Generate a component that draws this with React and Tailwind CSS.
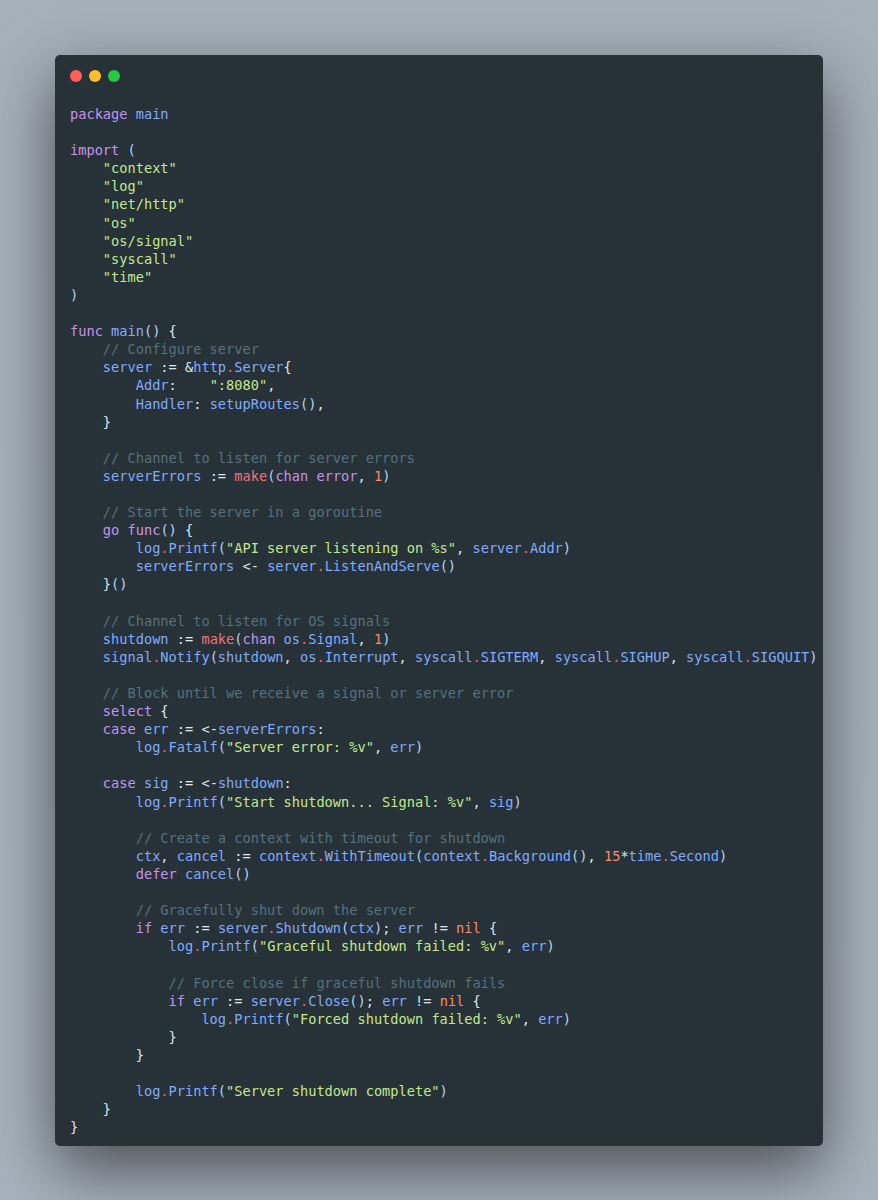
import React from 'react'

const code = `package main

import (
    "context"
    "log"
    "net/http"
    "os"
    "os/signal"
    "syscall"
    "time"
)

func main() {
    // Configure server
    server := &http.Server{
        Addr:    ":8080",
        Handler: setupRoutes(),
    }

    // Channel to listen for server errors
    serverErrors := make(chan error, 1)

    // Start the server in a goroutine
    go func() {
        log.Printf("API server listening on %s", server.Addr)
        serverErrors <- server.ListenAndServe()
    }()

    // Channel to listen for OS signals
    shutdown := make(chan os.Signal, 1)
    signal.Notify(shutdown, os.Interrupt, syscall.SIGTERM, syscall.SIGHUP, syscall.SIGQUIT)

    // Block until we receive a signal or server error
    select {
    case err := <-serverErrors:
        log.Fatalf("Server error: %v", err)

    case sig := <-shutdown:
        log.Printf("Start shutdown... Signal: %v", sig)

        // Create a context with timeout for shutdown
        ctx, cancel := context.WithTimeout(context.Background(), 15*time.Second)
        defer cancel()

        // Gracefully shut down the server
        if err := server.Shutdown(ctx); err != nil {
            log.Printf("Graceful shutdown failed: %v", err)

            // Force close if graceful shutdown fails
            if err := server.Close(); err != nil {
                log.Printf("Forced shutdown failed: %v", err)
            }
        }

        log.Printf("Server shutdown complete")
    }
}`

const keywords = ['package', 'import', 'func', 'go', 'select', 'case', 'defer', 'if', 'chan', 'error']

// tiny go tokenizer, good enough for this snippet
const tokenize = (line) => {
  const re = /(\/\/.*$)|("[^"]*")|(\d+)|([A-Za-z_]\w*)|(\.)|([()])|(\s+)|(.)/g
  const out = []
  let m
  while ((m = re.exec(line)) !== null) {
    const t = m[0]
    let cls = 'text-[#dde6ee]'
    if (m[1]) cls = 'text-[#56707c]'
    else if (m[2]) cls = 'text-[#c3e88d]'
    else if (m[3]) cls = 'text-[#f78c6c]'
    else if (m[4]) {
      if (keywords.includes(t)) cls = 'text-[#c792ea]'
      else if (t === 'make') cls = 'text-[#f07178]'
      else if (t === 'nil') cls = 'text-[#f78c6c]'
      else cls = 'text-[#82aaff]'
    } else if (m[5]) cls = 'text-[#ff5370]'
    else if (m[6]) cls = 'text-[#b8d3f5]'
    out.push({ t, cls })
  }
  return out
}

const CodeLine = ({ line }) => (
  <div className="h-[18.1px]">
    {line.length === 0 ? ' ' : tokenize(line).map((tok, i) => (
      <span key={i} className={tok.cls}>{tok.t}</span>
    ))}
  </div>
)

const App = () => {
  const lines = code.split('\n')
  return (
    <div className="min-h-[1200px] w-[878px] bg-gradient-to-b from-[#a5b0ba] to-[#a6b2bd] px-[55px] pt-[55px]">
      <div className="w-full rounded-[5px] bg-[#263238] pl-[15px] pr-2 pt-[15px] pb-[10px] shadow-[0_24px_64px_rgba(0,0,0,0.55)]">
        <div className="flex gap-[7px] mb-[23px]">
          <span className="w-3 h-3 rounded-full bg-[#ff5f56]"></span>
          <span className="w-3 h-3 rounded-full bg-[#ffbd2e]"></span>
          <span className="w-3 h-3 rounded-full bg-[#27c93f]"></span>
        </div>
        <div className="font-['DejaVu_Sans_Mono',monospace] text-[13.65px] leading-[18.1px] whitespace-pre">
          {lines.map((l, i) => <CodeLine key={i} line={l} />)}
        </div>
      </div>
    </div>
  )
}

export default App
